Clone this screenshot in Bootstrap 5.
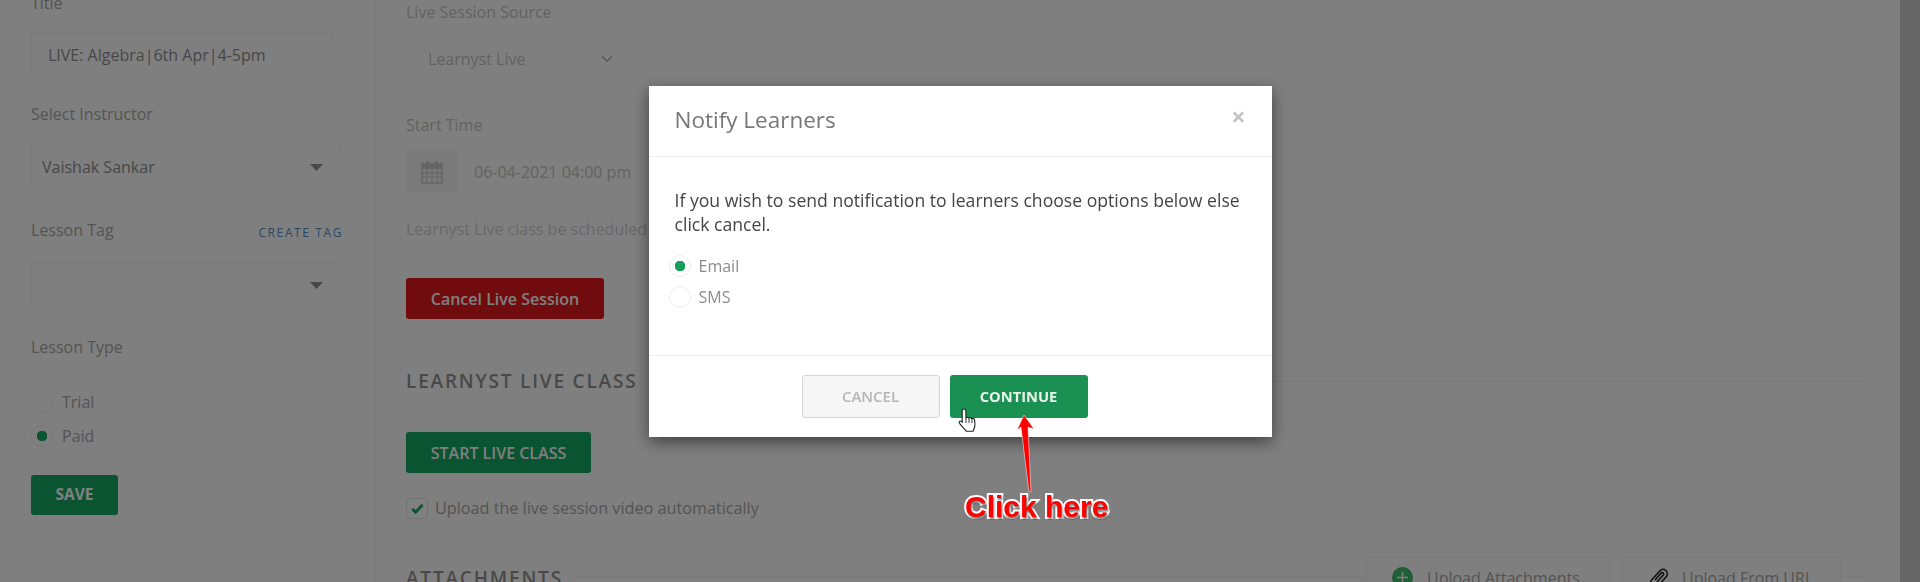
<!doctype html>
<html lang="en">
<head>
    <meta charset="UTF-8">
    <meta name="viewport" content="width=device-width, initial-scale=1">
    <title>Edit Lesson</title>
    <link href="https://cdn.jsdelivr.net/npm/bootstrap@5.3.2/dist/css/bootstrap.min.css" rel="stylesheet">
    <style>
        html, body { height: 582px; overflow: hidden; }
        body { font-family: "Open Sans", "Liberation Sans", sans-serif; font-size: 16px; color: #949494; background: #fff; }
        .page-wrap { height: 582px; overflow: hidden; }
        .side-col { width: 376px; flex: none; padding: 0 0 0 31px; margin-top: -9px; border-right: 1px solid #f5f5f5; }
        .main-col { flex: 1 1 auto; min-width: 0; padding: 0 32px 0 30px; }
        .fake-scroll { width: 20px; flex: none; background: #ccc; }
        .fld-label { line-height: 24px; color: #a8a8a8; display: block; margin: 0; }
        .main-col .fld-label { color: #c6c6c6; }
        .txt-input { width: 302px; height: 45px; margin: 17px 0 25px; border: 1px solid #f5f5f5; border-radius: 0; padding: 0 16px; font-size: 16px; color: #8e8e8e; }
        .inst-label { margin-bottom: 19px; }
        .side-select { width: 310px; height: 44px; border: 1px solid #f5f5f5; border-radius: 0; padding: 0 10px; font-size: 16px; color: #8e8e8e; background-size: 13px 7px; background-position: right 17px center;
            background-image: url("data:image/svg+xml,%3csvg xmlns='http://www.w3.org/2000/svg' viewBox='0 0 13 7'%3e%3cpath fill='%23909090' d='M0 0h13L6.500 7z'/%3e%3c/svg%3e"); }
        .create-tag { font-size: 12px; letter-spacing: 1.6px; color: #5a8ec8; text-decoration: none; line-height: 24px; margin-top: 3px; }
        .tag-head { width: 312px; margin-top: 29px; margin-bottom: 18px; }
        .type-head { margin-top: 28px; margin-bottom: 32px; }
        .radio-row { height: 22px; margin-bottom: 12px; gap: 9px; }
        .dot-radio { width: 22px; height: 22px; margin: 0; flex: none; border: 1px solid #f2f2f2; background-color: #fff; }
        .dot-radio:checked { border-color: #f2f2f2; background-color: #fff; background-image: radial-gradient(circle, #16a864 5px, transparent 5.5px); }
        .dot-radio:focus { box-shadow: none; border-color: #f2f2f2; }
        .radio-text { color: #a8a8a8; line-height: 22px; }
        .green-btn { background: #16a864; color: #fff; border: 0; border-radius: 3px; font-weight: 600; font-size: 16px; }
        .save-btn { width: 87px; height: 40px; margin-top: 16px; padding: 0; font-weight: 700; font-size: 15.500px; }
        .source-select { width: 221px; height: 45px; border: 0; padding: 0 0 0 22px; font-size: 16px; color: #c6c6c6; margin: 12px 0 32px;
            background-image: url("data:image/svg+xml,%3csvg xmlns='http://www.w3.org/2000/svg' viewBox='0 0 16 16'%3e%3cpath fill='none' stroke='%23b0b0b0' stroke-linecap='round' stroke-linejoin='round' stroke-width='2' d='m2 5 6 6 6-6'/%3e%3c/svg%3e"); }
        .cal-box { width: 52px; height: 41px; background: #f5f5f5; flex: none; }
        .time-group { margin-top: 14px; margin-bottom: 25px; }
        .time-text { color: #c6c6c6; padding-left: 16px; white-space: nowrap; }
        .note-text { color: #d2d2d2; line-height: 24px; white-space: nowrap; margin: 0 0 37px; }
        .cancel-live { width: 198px; height: 41px; background: #e0181b; color: #fff; border: 0; border-radius: 3px; font-size: 16px; font-weight: 600; padding: 0; display: block; }
        .sec-head { font-size: 19px; font-weight: 600; letter-spacing: 1.800px; color: #929292; margin: 0; white-space: nowrap; line-height: 24px; }
        .sec-line { flex: 1 1 auto; border-top: 1px solid #f2f2f2; }
        .live-head { margin-top: 50px; margin-bottom: 39px; }
        .start-live { width: 185px; height: 41px; padding: 0; display: block; margin-top: 1px; }
        .upload-row { height: 21px; margin-top: 25px; }
        .tick-box { width: 22px; height: 21px; margin: 0; flex: none; border: 1px solid #e4e4e4; border-radius: 2px; background-color: #fff; }
        .tick-box:checked { background-color: #fff; border-color: #e4e4e4; background-size: 15px; background-image: url("data:image/svg+xml,%3csvg xmlns='http://www.w3.org/2000/svg' viewBox='0 0 16 16'%3e%3cpath fill='none' stroke='%2316a864' stroke-width='3' d='M2.500 8.500l3.500 3.500 7.500-8'/%3e%3c/svg%3e"); }
        .tick-box:focus { box-shadow: none; border-color: #e4e4e4; }
        .upload-text { color: #a8a8a8; margin-left: 7px; font-size: 16.200px; }
        .attach-head { margin-top: 37px; }
        .attach-btn { height: 42px; border: 1px solid #f2f2f2; background: #fff; color: #a8a8a8; flex: none; }
        .attach-one { width: 244px; padding-left: 25px; gap: 14px; }
        .attach-two { width: 219px; padding-left: 26px; gap: 13px; margin: 1px 0 0 12px; }
        .plus-dot { width: 21px; height: 21px; border-radius: 50%; background: #3fbf6a; color: #fff; flex: none; }
        .sec-line-end { flex: 0 0 27px; }

        .modal-backdrop.dim-layer { opacity: .5; }
        .modal-dialog.notify-dialog { max-width: 623px; margin: 86px auto 0; }
        .notify-box { border: 0; border-radius: 0; box-shadow: 0 5px 15px rgba(0, 0, 0, .5); height: 351px; }
        .notify-box .modal-header { height: 71px; padding: 0 26px; border-bottom: 1px solid #eee; border-radius: 0; align-items: center; }
        .notify-title { font-size: 22.500px; color: #777; font-weight: 400; margin: -3px 0 0; line-height: 30px; }
        .close-x { background: none; border: 0; padding: 0; font-size: 25px; line-height: 1; font-weight: 700; color: #c4c4c4; margin: -9px 0 0 auto; }
        .notify-box .modal-body { height: 198px; flex: none; padding: 31px 26px 0; }
        .notify-text { font-size: 17.630px; line-height: 24px; color: #444; margin: 0 0 19px; }
        .notify-radio { height: 22px; margin: 0 0 9px -6px; }
        .notify-radio .radio-text { color: #8c8c8c; }
        .notify-radio .dot-radio { border-color: #eee; }
        .notify-radio .dot-radio:checked { background-image: radial-gradient(circle, #14a05a 5px, transparent 5.5px); }
        .notify-box .modal-footer { height: 82px; padding: 0 0 1px 153px; border-top: 1px solid #eee; border-radius: 0; justify-content: flex-start; align-items: center; gap: 10px; flex-wrap: nowrap; }
        .notify-box .modal-footer > * { margin: 0; }
        .btn-cancel-m { width: 138px; height: 43px; background: #f6f6f6; border: 1px solid #d4d4d4; border-radius: 3px; color: #b5b5b5; font-weight: 600; font-size: 15px; padding: 0; }
        .btn-continue-m { width: 138px; height: 43px; background: #1a9152; border: 0; border-radius: 3px; color: #e8f5ee; font-weight: 700; font-size: 14.700px; padding: 0; }

        .annot-layer { position: absolute; left: 0; top: 0; width: 1920px; height: 582px; z-index: 1060; pointer-events: none; }
        .click-here { position: absolute; left: 965px; top: 490px; font-family: "Liberation Sans", Arial, sans-serif; font-weight: 700; font-size: 30px; line-height: 34px; color: #f00; white-space: nowrap;
            -webkit-text-stroke: 4px #fff; paint-order: stroke fill; text-shadow: 1px 2px 2px rgba(0, 0, 0, .55); }
    </style>
</head>
<body>
<div class="page-wrap d-flex">
    <!-- left settings column -->
    <aside class="side-col">
        <label class="fld-label">Title</label>
        <input type="text" class="form-control txt-input" value="LIVE: Algebra|6th Apr|4-5pm">

        <label class="fld-label inst-label">Select Instructor</label>
        <select class="form-select side-select"><option>Vaishak Sankar</option></select>

        <div class="tag-head d-flex justify-content-between">
            <label class="fld-label">Lesson Tag</label>
            <a href="#" class="create-tag">CREATE TAG</a>
        </div>
        <select class="form-select side-select"><option></option></select>

        <label class="fld-label type-head">Lesson Type</label>
        <div class="radio-row d-flex align-items-center">
            <input class="form-check-input dot-radio" type="radio" name="lesson-type">
            <span class="radio-text">Trial</span>
        </div>
        <div class="radio-row d-flex align-items-center">
            <input class="form-check-input dot-radio" type="radio" name="lesson-type" checked>
            <span class="radio-text">Paid</span>
        </div>
        <button class="btn green-btn save-btn">SAVE</button>
    </aside>

    <!-- main column -->
    <main class="main-col">
        <label class="fld-label">Live Session Source</label>
        <select class="form-select source-select"><option>Learnyst Live</option></select>

        <label class="fld-label">Start Time</label>
        <div class="time-group d-flex align-items-center">
            <div class="cal-box d-flex align-items-center justify-content-center">
                <svg width="22" height="24" viewBox="0 0 22 24">
                    <rect x="1" y="4" width="20" height="19" fill="none" stroke="#c8c8c8" stroke-width="1.500"/>
                    <rect x="1" y="4" width="20" height="5" fill="#c8c8c8"/>
                    <rect x="5" y="1" width="3" height="6" rx="1" fill="#c8c8c8"/>
                    <rect x="14" y="1" width="3" height="6" rx="1" fill="#c8c8c8"/>
                    <path d="M1 13h20M1 17h20M6 9v14M11 9v14M16 9v14" stroke="#c8c8c8" fill="none"/>
                </svg>
            </div>
            <span class="time-text">06-04-2021 04:00 pm</span>
        </div>
        <p class="note-text">Learnyst Live class be scheduled</p>
        <button class="btn cancel-live">Cancel Live Session</button>

        <div class="live-head d-flex align-items-center gap-2">
            <h2 class="sec-head">LEARNYST LIVE CLASS</h2>
            <div class="sec-line"></div>
        </div>
        <button class="btn green-btn start-live">START LIVE CLASS</button>
        <div class="upload-row d-flex align-items-center">
            <input class="form-check-input tick-box" type="checkbox" checked>
            <span class="upload-text">Upload the live session video automatically</span>
        </div>

        <div class="attach-head d-flex align-items-center">
            <h2 class="sec-head me-2">ATTACHMENTS</h2>
            <div class="sec-line"></div>
            <div class="attach-btn attach-one d-flex align-items-center">
                <span class="plus-dot d-flex align-items-center justify-content-center">
                    <svg width="11" height="11" viewBox="0 0 11 11"><path d="M5.500 0v11M0 5.500h11" stroke="#fff" stroke-width="1.500"/></svg>
                </span>
                <span>Upload Attachments</span>
            </div>
            <div class="attach-btn attach-two d-flex align-items-center">
                <svg width="20" height="22" viewBox="0 0 20 22">
                    <path d="M9 19l8-9c2-2.300 1.500-5-.2-6.500S12.500 2 10.500 4.200L3 12.500c-1.400 1.600-1 3.300 0 4.200s2.600 1 4-.5l7-8c.8-1 .6-1.800.1-2.300s-1.400-.5-2.200.4L6 13" fill="none" stroke="#222" stroke-width="1.600"/>
                </svg>
                <span>Upload From URL</span>
            </div>
            <div class="sec-line sec-line-end"></div>
        </div>
    </main>

    <div class="fake-scroll"></div>
</div>

<div class="modal-backdrop dim-layer"></div>

<div class="modal d-block" tabindex="-1">
    <div class="modal-dialog notify-dialog">
        <div class="modal-content notify-box">
            <div class="modal-header">
                <h5 class="notify-title">Notify Learners</h5>
                <button type="button" class="close-x">×</button>
            </div>
            <div class="modal-body">
                <p class="notify-text">If you wish to send notification to learners choose options below else click cancel.</p>
                <div class="notify-radio d-flex align-items-center gap-2">
                    <input class="form-check-input dot-radio" type="radio" name="notify" checked>
                    <span class="radio-text">Email</span>
                </div>
                <div class="notify-radio d-flex align-items-center gap-2">
                    <input class="form-check-input dot-radio" type="radio" name="notify">
                    <span class="radio-text">SMS</span>
                </div>
            </div>
            <div class="modal-footer">
                <button type="button" class="btn btn-cancel-m">CANCEL</button>
                <button type="button" class="btn btn-continue-m">CONTINUE</button>
            </div>
        </div>
    </div>
</div>

<!-- screenshot annotation: arrow, hand pointer, caption -->
<div class="annot-layer">
    <svg width="1920" height="582" viewBox="0 0 1920 582">
        <polygon points="1024,415 1034,429 1028,427 1031,492 1029,492 1021,427 1017,430" fill="#f00" stroke="#fff" stroke-opacity=".5" stroke-width="1"/>
        <g transform="translate(958 408)">
            <path d="M6 1c1.100 0 1.900.8 1.900 1.900V10c.4-1 2.600-1.100 3 .3.400-.9 2.500-1 2.900.5.500-.7 2.300-.6 2.700.8.400 1.800.6 4.500.3 6.500-.3 2-1.200 3.500-1.800 5.200H8.500C6.500 21 3.500 18 1.500 15.300.6 14 1.600 12.600 3 13.200l1.200 1.100V2.900C4.200 1.800 5 1 6 1z" fill="#fff" stroke="#222" stroke-width="1.100" stroke-linejoin="round"/>
            <path d="M8 10v5M11 10.500V15M14 11v4" stroke="#222" stroke-width=".9" fill="none"/>
        </g>
    </svg>
    <span class="click-here">Click here</span>
</div>

<script src="https://cdn.jsdelivr.net/npm/bootstrap@5.3.2/dist/js/bootstrap.bundle.min.js"></script>
</body>
</html>
